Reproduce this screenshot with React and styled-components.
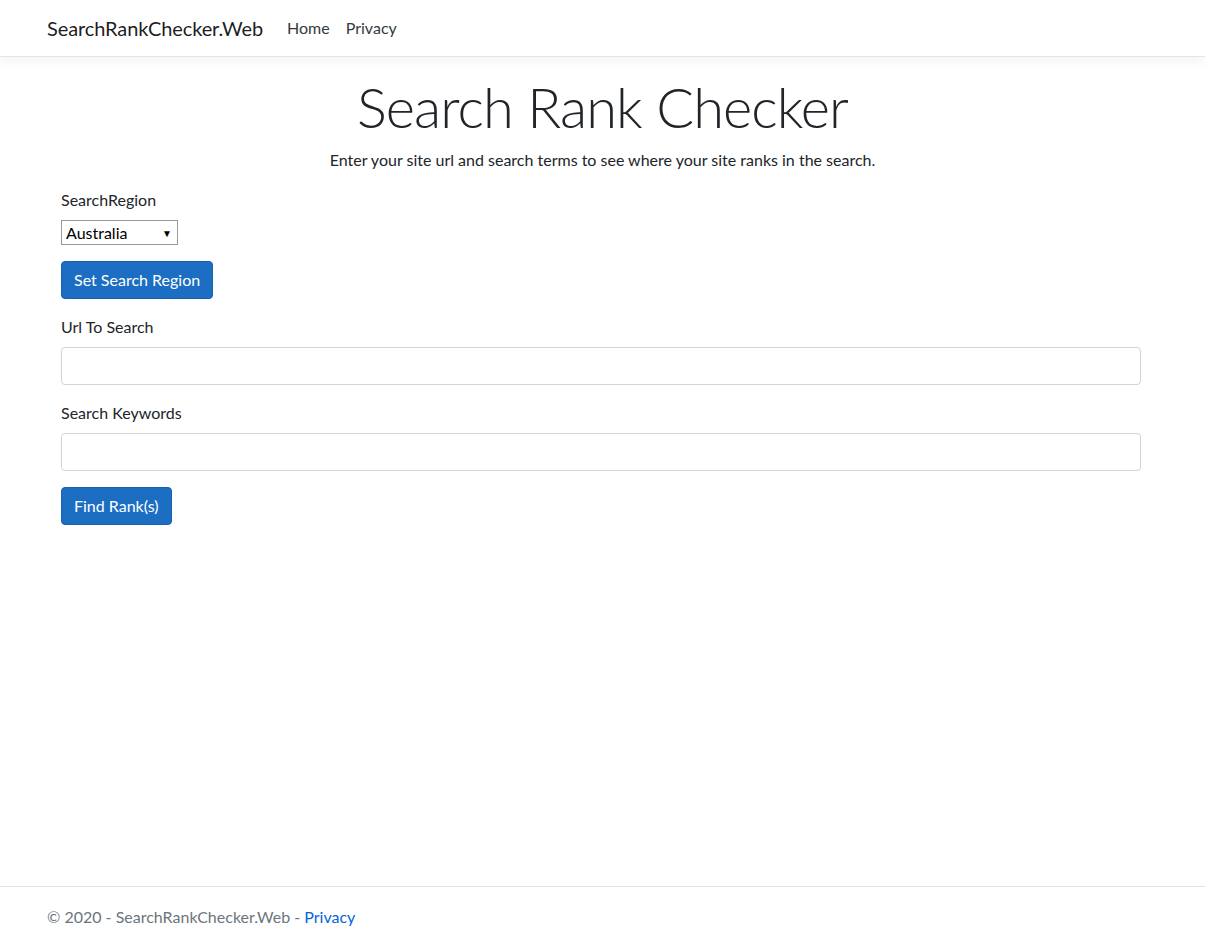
import React from "react";
import styled, { createGlobalStyle } from "styled-components";

const GlobalStyle = createGlobalStyle`
  *, *::before, *::after {
    box-sizing: border-box;
  }

  html, body {
    margin: 0;
    padding: 0;
    height: 100%;
  }

  body {
    font-family: Lato, "Open Sans", sans-serif;
    font-size: 16px;
    line-height: 1.5;
    color: #212529;
    background: #fff;
  }
`;

const Page = styled.div`
  display: flex;
  flex-direction: column;
  min-height: 100vh;
`;

const Navbar = styled.header`
  height: 57px;
  border-bottom: 1px solid #e5e5e5;
  box-shadow: 0 4px 12px rgba(0, 0, 0, 0.05);
  margin-bottom: 16px;
`;

const NavInner = styled.nav`
  max-width: 1140px;
  margin: 0 auto;
  padding: 0 15px 0 14.5px;
  height: 100%;
  display: flex;
  align-items: center;
`;

const Brand = styled.a`
  font-size: 20px;
  letter-spacing: -0.1px;
  color: rgba(0, 0, 0, 0.9);
  text-decoration: none;
  margin-right: 16px;
  padding: 5px 0;
`;

const NavLink = styled.a`
  color: #343a40;
  text-decoration: none;
  padding: 8px;
`;

const Main = styled.main`
  flex: 1;
  max-width: 1140px;
  width: 100%;
  margin: 0 auto;
  padding: 0 15px;
`;

const Hero = styled.div`
  text-align: center;
`;

const Title = styled.h1`
  font-size: 56px;
  font-weight: 300;
  letter-spacing: -0.9px;
  line-height: 1.2;
  margin: 0 0 8px;
`;

const Lead = styled.p`
  margin: 0 0 16px;
`;

const Form = styled.form`
  padding: 0 16.5px 0 13.5px;
  display: flex;
  flex-direction: column;
  align-items: flex-start;
  gap: 16px;
`;

const Group = styled.div`
  display: flex;
  flex-direction: column;
  align-items: flex-start;
  width: 100%;
`;

const Label = styled.label`
  margin-bottom: 8px;
`;

const SelectWrap = styled.div`
  position: relative;
  width: 117px;
  height: 25px;
`;

const Select = styled.select`
  appearance: none;
  width: 100%;
  height: 100%;
  border: 1px solid #999;
  border-radius: 0;
  background: #fff;
  color: #000;
  font: inherit;
  line-height: 1;
  padding: 0 20px 0 4px;
`;

const Caret = styled.span`
  position: absolute;
  right: 6px;
  top: 50%;
  transform: translateY(-55%);
  font-size: 10px;
  line-height: 1;
  color: #000;
  pointer-events: none;
`;

const Input = styled.input`
  width: 100%;
  height: 38px;
  padding: 6px 12px;
  font: inherit;
  color: #495057;
  border: 1px solid #ced4da;
  border-radius: 4px;
  background: #fff;
`;

const Button = styled.button`
  height: 38px;
  padding: 6px 12px;
  font: inherit;
  color: #fff;
  background: #1b6ec2;
  border: 1px solid #1861ac;
  border-radius: 4px;
  cursor: pointer;
`;

const Footer = styled.footer`
  border-top: 1px solid #dee2e6;
  line-height: 59px;
  color: #6c757d;
  white-space: nowrap;
`;

const FooterInner = styled.div`
  max-width: 1140px;
  margin: 0 auto;
  padding: 0 15px 0 14.5px;

  a {
    color: #0366d6;
    text-decoration: none;
  }
`;

export default function App() {
  return (
    <Page>
      <GlobalStyle />
      <Navbar>
        <NavInner>
          <Brand href="#">SearchRankChecker.Web</Brand>
          <NavLink href="#">Home</NavLink>
          <NavLink href="#">Privacy</NavLink>
        </NavInner>
      </Navbar>
      <Main>
        <Hero>
          <Title>Search Rank Checker</Title>
          <Lead>Enter your site url and search terms to see where your site ranks in the search.</Lead>
        </Hero>
        <Form onSubmit={(e) => e.preventDefault()}>
          <Group>
            <Label>SearchRegion</Label>
            <SelectWrap>
              <Select defaultValue="au">
                <option value="au">Australia</option>
                <option value="us">United States</option>
                <option value="uk">United Kingdom</option>
              </Select>
              <Caret>▼</Caret>
            </SelectWrap>
          </Group>
          <Button type="button">Set Search Region</Button>
          <Group>
            <Label>Url To Search</Label>
            <Input type="text" />
          </Group>
          <Group>
            <Label>Search Keywords</Label>
            <Input type="text" />
          </Group>
          <Button type="submit">Find Rank(s)</Button>
        </Form>
      </Main>
      <Footer>
        <FooterInner>
          © 2020 - SearchRankChecker.Web - <a href="#">Privacy</a>
        </FooterInner>
      </Footer>
    </Page>
  );
}
